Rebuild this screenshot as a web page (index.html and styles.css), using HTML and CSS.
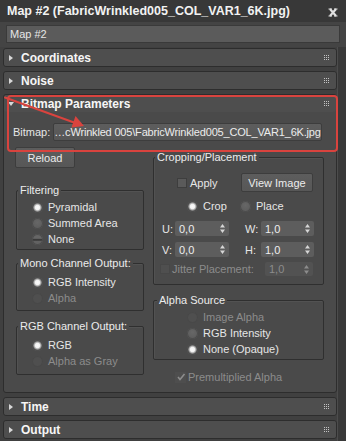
FILE: index.html
```html
<!DOCTYPE html>
<html lang="en">
<head>
    <meta charset="UTF-8">
    <meta name="viewport" content="width=device-width, initial-scale=1.0">
    <title>Map #2</title>
    <link rel="stylesheet" href="styles.css">
</head>
<body>
    <div class="window">
        <div class="titlebar">
            <span class="title">Map #2 (FabricWrinkled005_COL_VAR1_6K.jpg)</span>
            <svg class="close" width="10" height="9" viewBox="0 0 10 9">
                <path d="M2 1L8 8M8 1L2 8" stroke="#e0e0e0" stroke-width="2.2" fill="none"/>
                <path d="M0.5 1h3.5M6 1h3.5M0.5 8h3.5M6 8h3.5" stroke="#e0e0e0" stroke-width="1.2"/>
            </svg>
        </div>
        <div class="namebar">
            <div class="name-field">Map #2</div>
        </div>
        <div class="main">
            <div class="rollouts">
                <div class="rollout">
                    <div class="rollout-head"><span class="tri"></span><span class="rollout-title">Coordinates</span><span class="grip"></span></div>
                </div>
                <div class="rollout">
                    <div class="rollout-head"><span class="tri"></span><span class="rollout-title">Noise</span><span class="grip"></span></div>
                </div>
                <div class="rollout open">
                    <div class="rollout-head"><span class="tri down"></span><span class="rollout-title">Bitmap Parameters</span><span class="grip"></span></div>
                    <div class="rollout-body">
                        <div class="bitmap-row">
                            <span class="bitmap-label">Bitmap:</span>
                            <div class="btn path-btn">…cWrinkled 005\FabricWrinkled005_COL_VAR1_6K.jpg</div>
                        </div>
                        <div class="columns">
                            <div class="col-left">
                                <div class="btn reload-btn">Reload</div>

                                <div class="group filtering">
                                    <div class="group-title">Filtering</div>
                                    <div class="rows">
                                        <div class="radio on">Pyramidal</div>
                                        <div class="radio">Summed Area</div>
                                        <div class="radio half">None</div>
                                    </div>
                                </div>

                                <div class="group mono">
                                    <div class="group-title">Mono Channel Output:</div>
                                    <div class="rows">
                                        <div class="radio on">RGB Intensity</div>
                                        <div class="radio off">Alpha</div>
                                    </div>
                                </div>

                                <div class="group rgb">
                                    <div class="group-title">RGB Channel Output:</div>
                                    <div class="rows">
                                        <div class="radio on">RGB</div>
                                        <div class="radio off">Alpha as Gray</div>
                                    </div>
                                </div>
                            </div>

                            <div class="col-right">
                                <div class="group cropping">
                                    <div class="group-title">Cropping/Placement</div>
                                    <div class="apply-row">
                                        <span class="check"></span>
                                        <span>Apply</span>
                                        <div class="btn view-btn">View Image</div>
                                    </div>
                                    <div class="crop-row">
                                        <div class="radio on crop">Crop</div>
                                        <div class="radio">Place</div>
                                    </div>
                                    <div class="spin-row first">
                                        <span>U:</span>
                                        <div class="spin">0,0<svg class="arrows" width="5" height="9" viewBox="0 0 5 9"><path d="M0 3.5h5L2.5 0zM0 5.5h5L2.5 9z"/></svg></div>
                                        <span></span>
                                        <span>W:</span>
                                        <div class="spin">1,0<svg class="arrows" width="5" height="9" viewBox="0 0 5 9"><path d="M0 3.5h5L2.5 0zM0 5.5h5L2.5 9z"/></svg></div>
                                    </div>
                                    <div class="spin-row">
                                        <span>V:</span>
                                        <div class="spin">0,0<svg class="arrows" width="5" height="9" viewBox="0 0 5 9"><path d="M0 3.5h5L2.5 0zM0 5.5h5L2.5 9z"/></svg></div>
                                        <span></span>
                                        <span>H:</span>
                                        <div class="spin">1,0<svg class="arrows" width="5" height="9" viewBox="0 0 5 9"><path d="M0 3.5h5L2.5 0zM0 5.5h5L2.5 9z"/></svg></div>
                                    </div>
                                    <div class="jitter-row">
                                        <span class="check off"></span>
                                        <span class="dim">Jitter Placement:</span>
                                        <div class="spin off">1,0<svg class="arrows" width="5" height="9" viewBox="0 0 5 9"><path d="M0 3.5h5L2.5 0zM0 5.5h5L2.5 9z"/></svg></div>
                                    </div>
                                </div>

                                <div class="group alpha">
                                    <div class="group-title">Alpha Source</div>
                                    <div class="rows">
                                        <div class="radio off">Image Alpha</div>
                                        <div class="radio">RGB Intensity</div>
                                        <div class="radio on">None (Opaque)</div>
                                    </div>
                                </div>

                                <div class="premult-row">
                                    <span class="check off checked">
                                        <svg width="10" height="10" viewBox="0 0 10 10"><path d="M2 5l2 2.5L8.5 2" stroke="#8d8d8d" stroke-width="1.6" fill="none"/></svg>
                                    </span>
                                    <span class="dim">Premultiplied Alpha</span>
                                </div>
                            </div>
                        </div>
                    </div>
                </div>
                <div class="rollout">
                    <div class="rollout-head"><span class="tri"></span><span class="rollout-title">Time</span><span class="grip"></span></div>
                </div>
                <div class="rollout">
                    <div class="rollout-head"><span class="tri"></span><span class="rollout-title">Output</span><span class="grip"></span></div>
                </div>
            </div>
            <div class="scrollbar"></div>
        </div>

        <!-- red annotation drawn over the panel -->
        <div class="highlight"></div>
        <svg class="arrow" width="100" height="50" viewBox="0 90 100 50">
            <path d="M5 97.5L74 122.5" stroke="#d9433e" stroke-width="2" stroke-linecap="round"/>
            <path d="M84 126L71.5 127.5L75.5 116z" fill="#d9433e"/>
        </svg>
    </div>
</body>
</html>
```

FILE: styles.css
```css
body {
    margin: 0;
    width: 346px;
    height: 441px;
    overflow: hidden;
    background-color: #3c3c3c;
    font-family: "Liberation Sans", Arial, sans-serif;
    font-size: 11px;
    color: #e6e6e6;
}
.window {
    position: relative;
    height: 441px;
}
.titlebar {
    height: 22px;
    background-color: #383838;
    display: flex;
    align-items: center;
    justify-content: space-between;
    padding: 0 8px 0 7px;
}
.title {
    font-size: 12.5px;
    font-weight: bold;
    color: #f2f2f2;
}
.close {
    margin-top: 2px;
}
.namebar {
    height: 25px;
    box-sizing: border-box;
    padding: 3px 6px 0;
    background-color: #444444;
}
.name-field {
    height: 18px;
    box-sizing: border-box;
    border: 1px solid #3a3a3a;
    background-color: #5b5b5b;
    padding-left: 3px;
    line-height: 16px;
    color: #e6e6e6;
}
.main {
    display: flex;
    height: 394px;
    background-color: #404040;
}
.rollouts {
    width: 334px;
    margin-left: 3px;
    padding-top: 1px;
}
.scrollbar {
    margin-left: auto;
    width: 8px;
    background-color: #393939;
    border-left: 1px solid #4c4c4c;
}
.rollout {
    border: 1px solid #2d2d2d;
    border-radius: 3px;
    background-color: #4a4a4a;
    margin-bottom: 4px;
}
.rollout.open {
    height: 299px;
    box-sizing: border-box;
}
.rollout-head {
    height: 17px;
    display: flex;
    align-items: center;
    padding: 0 7px 0 5px;
    background-color: #4e4e4e;
    border-radius: 3px;
}
.tri {
    width: 0;
    height: 0;
    border-left: 4px solid #d8d8d8;
    border-top: 3px solid transparent;
    border-bottom: 3px solid transparent;
    margin-right: 8px;
}
.tri.down {
    border-left: 3px solid transparent;
    border-right: 3px solid transparent;
    border-top: 4px solid #d8d8d8;
    border-bottom: 0;
    margin-left: -1px;
    margin-right: 7px;
}
.rollout-title {
    font-size: 12px;
    font-weight: bold;
    color: #f6f6f6;
}
.grip {
    margin-left: auto;
    width: 1px;
    height: 1px;
    margin-right: 4px;
    margin-top: -4px;
    background-color: #c4c4c4;
    box-shadow: 2px 0 #c4c4c4, 4px 0 #c4c4c4,
                0 2px #c4c4c4, 2px 2px #c4c4c4, 4px 2px #c4c4c4,
                0 4px #c4c4c4, 2px 4px #c4c4c4, 4px 4px #c4c4c4;
}
.rollout-body {
    padding-top: 11px;
}
.bitmap-row {
    display: flex;
    align-items: center;
    height: 18px;
    padding-left: 9px;
}
.bitmap-label {
    width: 40px;
}
.btn {
    box-sizing: border-box;
    background: linear-gradient(#5d5d5d, #575757);
    border: 1px solid #3d3d3d;
    border-radius: 2px;
    color: #ececec;
    display: flex;
    align-items: center;
    justify-content: center;
}
.path-btn {
    width: 269px;
    height: 18px;
    white-space: nowrap;
    letter-spacing: -0.18px;
}
.columns {
    display: flex;
    margin-top: 6px;
    padding-left: 11px;
}
.col-left {
    width: 129px;
}
.col-right {
    width: 171px;
    margin-left: 9px;
}
.reload-btn {
    width: 60px;
    height: 21px;
}
.group {
    border: 1px solid #2f2f2f;
    border-radius: 2px;
    box-shadow: inset 1px 1px 0 #525252;
}
.group-title {
    display: table;
    margin: -7px 0 0 1px;
    padding: 0 2px;
    line-height: 13px;
    background-color: #4a4a4a;
    color: #ececec;
}
.col-left .group {
    width: 128px;
    margin-left: 1px;
    box-sizing: border-box;
}
.col-left .rows {
    padding-left: 15px;
}
.filtering {
    margin-top: 22px;
}
.filtering .rows {
    padding-top: 2px;
    padding-bottom: 2px;
}
.mono {
    margin-top: 13px;
}
.mono .rows {
    padding-top: 4px;
    padding-bottom: 4px;
}
.rgb {
    margin-top: 15px;
}
.rgb .rows {
    padding-top: 4px;
    padding-bottom: 5px;
}
.radio {
    display: flex;
    align-items: center;
    height: 16px;
}
.radio::before {
    content: '';
    width: 11px;
    height: 11px;
    border-radius: 50%;
    background: radial-gradient(circle at 50% 40%, #676767, #585858);
    box-shadow: inset 0 0 0 1px #4d4d4d;
    margin-right: 5px;
    flex-shrink: 0;
}
.radio.on::before {
    background: radial-gradient(circle, #fbfbfb 0, #f2f2f2 2.2px, #a8a8a8 3.4px, #5d5d5d 4.6px);
}
.radio.half::before {
    background: linear-gradient(#666 0, #666 40%, #3a3a3a 45%, #3a3a3a 58%, #626262 63%);
}
.radio.off {
    color: #8c8c8c;
}
.radio.off::before {
    background: #4f4f4f;
    box-shadow: inset 0 0 0 1px #484848;
}
.cropping {
    margin-top: 10px;
    padding-bottom: 8px;
}
.apply-row {
    display: flex;
    align-items: center;
    height: 19px;
    margin-top: 9px;
    padding-left: 23px;
}
.check {
    width: 10px;
    height: 10px;
    box-sizing: border-box;
    background-color: #5a5a5a;
    border: 1px solid #3e3e3e;
    margin-right: 3px;
    flex-shrink: 0;
}
.check.off {
    background-color: #4f4f4f;
    border-color: #474747;
}
.check.checked {
    width: 11px;
    height: 11px;
    border: 0;
    background-color: #4e4e4e;
    display: flex;
    align-items: center;
    justify-content: center;
}
.view-btn {
    margin-left: auto;
    margin-right: 10px;
    width: 72px;
    height: 19px;
}
.crop-row {
    display: flex;
    margin-top: 6px;
    padding-left: 33px;
}
.radio.crop {
    width: 53px;
}
.spin-row {
    display: grid;
    grid-template-columns: 13px 54px 16px 16px 53px;
    align-items: center;
    height: 15px;
    margin-top: 6px;
    padding-left: 8px;
}
.spin-row.first {
    margin-top: 7px;
}
.spin {
    height: 15px;
    box-sizing: border-box;
    background-color: #5d5d5d;
    border-radius: 2px;
    display: flex;
    align-items: center;
    padding: 0 4px 0 4px;
    color: #eeeeee;
}
.arrows {
    margin-left: auto;
    fill: #d6d6d6;
}
.spin.off {
    background-color: #525252;
    color: #8c8c8c;
}
.spin.off .arrows {
    fill: #8c8c8c;
}
.jitter-row {
    display: flex;
    align-items: center;
    height: 14px;
    margin-top: 5px;
    padding-left: 6px;
}
.jitter-row .check {
    margin-right: 2px;
}
.jitter-row .spin {
    margin-left: auto;
    margin-right: 10px;
    width: 48px;
    height: 14px;
}
.dim {
    color: #8c8c8c;
}
.alpha {
    margin-top: 15px;
}
.alpha .group-title {
    margin-left: 3px;
}
.alpha .rows {
    padding: 2px 0 2px 33px;
}
.premult-row {
    display: flex;
    align-items: center;
    height: 14px;
    margin-top: 10px;
    padding-left: 22px;
}
.premult-row .check {
    margin-right: 2px;
}
.highlight {
    position: absolute;
    left: 7px;
    top: 95px;
    width: 331px;
    height: 57px;
    box-sizing: border-box;
    border: 2px solid #d9433e;
    border-radius: 4px;
}
.arrow {
    position: absolute;
    left: 0;
    top: 90px;
}
```
